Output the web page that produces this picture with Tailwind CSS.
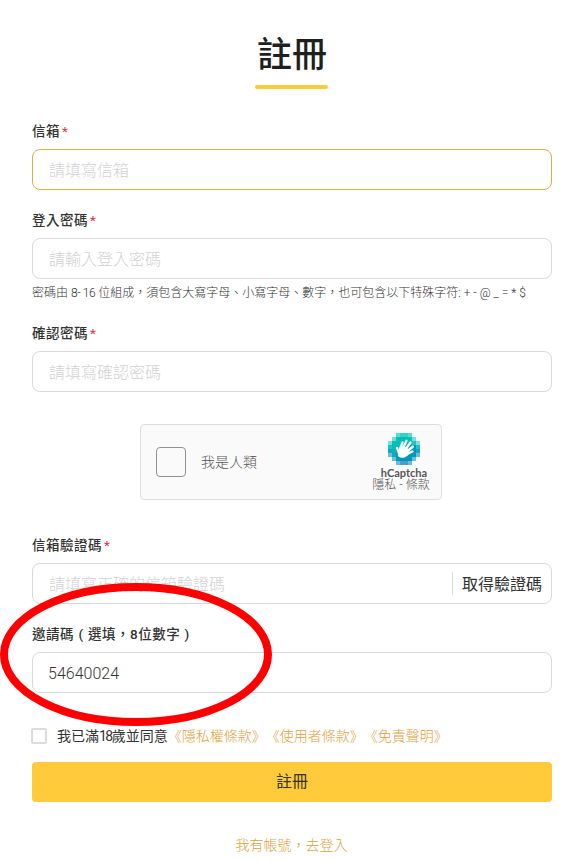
<!DOCTYPE html>
<html lang="zh-Hant">
<head>
  <meta charset="UTF-8" />
  <meta name="viewport" content="width=device-width, initial-scale=1" />
  <title>註冊</title>
  <script src="https://cdn.jsdelivr.net/npm/@tailwindcss/browser@4"></script>
</head>
<body class="relative bg-white min-h-screen overflow-hidden text-[#333] font-['Roboto','Noto_Sans_CJK_TC',sans-serif] [text-spacing-trim:space-all]">

  <main class="w-[520px] ml-8 pt-[33px]">
    <header class="flex flex-col items-center">
      <h1 class="h-[45px] text-[35px] leading-[45px] font-medium text-[#1f1f1f]">註冊</h1>
      <div class="mt-[7px] mr-0.5 w-[73px] h-1 rounded-full bg-[#ffcb3a]"></div>
    </header>

    <form class="mt-8">
      <div>
        <label for="email" class="flex h-5 text-[13.5px] leading-5 font-medium tracking-[0.5px]">信箱<span class="ml-[2px] text-[#d9363e] font-normal">*</span></label>
        <input id="email" type="text" placeholder="請填寫信箱" class="mt-2 block w-full h-[41px] px-4 pt-0.5 rounded-lg border border-[#e0ae3c] text-base font-light placeholder:text-[#d2d2d2] outline-none" />
      </div>

      <div class="mt-5">
        <label for="password" class="flex h-5 text-[13.5px] leading-5 font-medium tracking-[0.5px]">登入密碼<span class="ml-[2px] text-[#d9363e] font-normal">*</span></label>
        <input id="password" type="text" placeholder="請輸入登入密碼" class="mt-2 block w-full h-[41px] px-4 pt-0.5 rounded-lg border border-[#d9d9d9] text-base font-light placeholder:text-[#d2d2d2] outline-none" />
        <p class="mt-1 h-5 text-xs leading-5 font-light whitespace-nowrap">密碼由 <span class="tracking-[-0.4px]">8- 16</span> 位組成，須包含大寫字母、小寫字母、數字，也可包含以下特殊字符: + - @ _ = * $</p>
      </div>

      <div class="mt-5">
        <label for="confirm" class="flex h-5 text-[13.5px] leading-5 font-medium tracking-[0.5px]">確認密碼<span class="ml-[2px] text-[#d9363e] font-normal">*</span></label>
        <input id="confirm" type="text" placeholder="請填寫確認密碼" class="mt-2 block w-full h-[41px] px-4 pt-0.5 rounded-lg border border-[#d9d9d9] text-base font-light placeholder:text-[#d2d2d2] outline-none" />
      </div>

      <!-- hCaptcha -->
      <div class="mt-8 ml-[108px] flex items-center w-[302px] h-[76px] pl-[15px] pr-[9px] rounded border border-[#dedede] bg-[#fafafa]">
        <div class="size-[30px] rounded border border-[#919191] bg-[#fafafa]"></div>
        <span class="ml-[15px] text-sm font-light text-[#555]">我是人類</span>
        <div class="ml-auto flex flex-col items-center w-[60px]">
          <svg class="ml-1 size-8" viewBox="0 0 32 32" shape-rendering="crispEdges">
            <path fill="#54dfcd" d="M8 0h16v4H8z" />
            <path fill="#35d0cb" d="M4 4h24v4H4zM12 0h8v4h-8z" />
            <path fill="#22bfc7" d="M0 8h32v8H0z" />
            <path fill="#0fa9c0" d="M0 16h32v8H0z" />
            <path fill="#168bbd" d="M4 24h24v4H4z" />
            <path fill="#4b9bd0" d="M8 28h16v4H8z" />
            <path fill="#00bfb4" d="M8 4h16v4H8zM4 8h20v8H4z" />
            <path fill="#0099b5" d="M8 20h16v8H8zM20 12h8v12h-8z" />
            <path fill="#72dfe0" d="M4 4h4v4H4zM24 4h4v4h-4zM0 8h4v4H0zM28 8h4v4h-4z" />
            <path fill="#68bcdc" d="M0 20h4v4H0zM28 20h4v4h-4zM4 24h4v4H4zM24 24h4v4h-4zM8 28h4v4H8zM20 28h4v4h-4z" />
            <g fill="none" stroke="#fff" stroke-width="2.3" stroke-linecap="round" stroke-linejoin="round" shape-rendering="auto">
              <path d="M12 16 14.500 9.500M15 15 18.500 7.800M17.500 16.500 22.500 9.500M19 18.500 25 13.500M19 21 24.500 18.500M11 20 9 15" />
              <path fill="#fff" d="M11 19.500 12.500 15.500 16 14 20 17.500 20 20.500C18 24 13.500 24.500 11 22.500z" />
            </g>
          </svg>
          <span class="ml-1 h-3 text-[11px] leading-[16px] font-bold text-[#555] font-['Lato',sans-serif]">hCaptcha</span>
          <span class="mr-0.5 h-3.5 text-xs leading-[16px] font-light text-[#555] whitespace-nowrap">隱私 - 條款</span>
        </div>
      </div>

      <div class="mt-[35px]">
        <label for="code" class="flex h-5 text-[13.5px] leading-5 font-medium tracking-[0.5px]">信箱驗證碼<span class="ml-[2px] text-[#d9363e] font-normal">*</span></label>
        <div class="mt-2 flex items-center w-full h-[41px] pl-4 pr-[9px] rounded-lg border border-[#d9d9d9]">
          <input id="code" type="text" placeholder="請填寫正確的信箱驗證碼" class="flex-1 pt-0.5 text-base font-light placeholder:text-[#d2d2d2] outline-none" />
          <button type="button" class="h-[23px] pl-[9px] border-l border-[#d9d9d9] text-base leading-[25px]">取得驗證碼</button>
        </div>
      </div>

      <div class="mt-5">
        <label for="invite" class="flex h-5 text-[13.5px] leading-5 font-medium tracking-[0.5px]">邀請碼<span class="w-3.5 text-center">(</span>選填，8位數字<span class="w-3.5 text-center">)</span></label>
        <input id="invite" type="text" value="54640024" class="mt-2 block w-full h-[41px] pl-[15px] pr-4 pt-0.5 rounded-lg border border-[#d9d9d9] text-base font-light outline-none" />
      </div>

      <div class="mt-[33px] -ml-px flex items-center h-5 text-sm whitespace-nowrap">
        <span class="size-4 rounded-xs border-2 border-[#dcdcdc]"></span>
        <span class="ml-2.5">我已滿<span class="tracking-[-1.5px]">18</span>歲並同意</span>
        <span class="font-light text-[#e0a03c]">《隱私權條款》《使用者條款》《免責聲明》</span>
      </div>

      <button type="button" class="mt-4 block w-full h-10 rounded bg-[#ffcb3a] text-base">註冊</button>
    </form>

    <p class="mt-[33px] -ml-px h-5 text-sm leading-5 font-light text-center text-[#e0a03c]">我有帳號，去登入</p>
  </main>

  <!-- highlight around the invite code -->
  <svg class="absolute left-0 top-[582px] w-[273px] h-[145px] pointer-events-none" viewBox="0 0 273 145">
    <ellipse cx="136" cy="72.500" rx="132" ry="67.500" fill="none" stroke="#ff0000" stroke-width="8" />
  </svg>

</body>
</html>
